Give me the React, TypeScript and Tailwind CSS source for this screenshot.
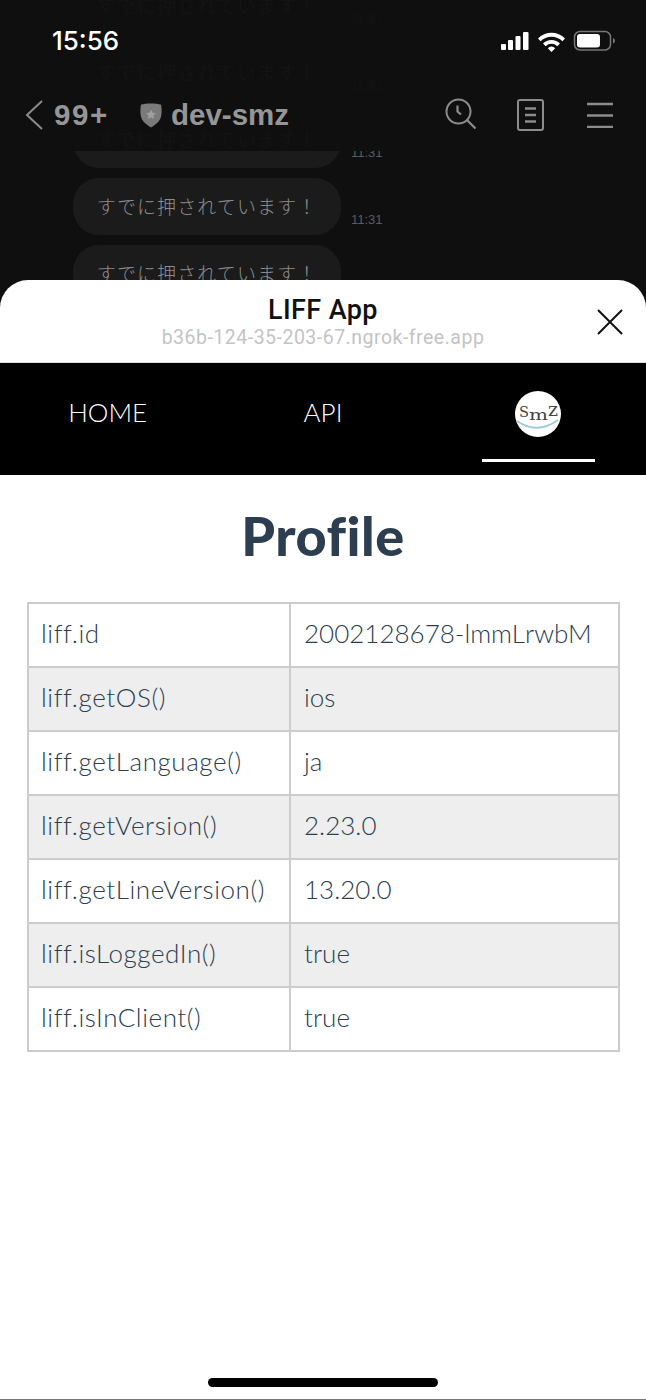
const rows = [
  ['liff.id', '2002128678-lmmLrwbM'],
  ['liff.getOS()', 'ios'],
  ['liff.getLanguage()', 'ja'],
  ['liff.getVersion()', '2.23.0'],
  ['liff.getLineVersion()', '13.20.0'],
  ['liff.isLoggedIn()', 'true'],
  ['liff.isInClient()', 'true'],
]

function StatusIcons() {
  return (
    <svg width="116" height="22" viewBox="0 0 116 22" className="block">
      <rect x="1" y="14" width="5" height="6" rx="1" fill="#fff" />
      <rect x="8" y="10" width="5" height="10" rx="1" fill="#fff" />
      <rect x="15.5" y="6" width="5" height="14" rx="1" fill="#fff" />
      <rect x="23" y="2" width="5.5" height="18" rx="1" fill="#fff" />
      <path d="M38 8.5a19 19 0 0 1 27 0l-2.6 2.8a15.300 15.300 0 0 0-21.800 0Z" fill="#fff" />
      <path d="M43 13.500a12 12 0 0 1 17 0l-2.700 2.800a8 8 0 0 0-11.600 0Z" fill="#fff" />
      <path d="M47.800 18.200a5 5 0 0 1 7.400 0L51.500 22Z" fill="#fff" />
      <rect x="74.500" y="1.500" width="36" height="18.500" rx="5.500" fill="none" stroke="#777" strokeWidth="1.500" />
      <rect x="77" y="4" width="23" height="13.500" rx="3" fill="#fff" />
      <path d="M113 8v5.500a3 3 0 0 0 2-2.700 3 3 0 0 0-2-2.800Z" fill="#777" />
    </svg>
  )
}

function NavIcons() {
  return (
    <div className="flex items-center">
      <svg width="33" height="33" viewBox="0 0 33 33" fill="none" stroke="#8c8c8c" strokeWidth="2" className="mr-[39px]">
        <circle cx="13.500" cy="13.500" r="12" />
        <path d="M22 22l8.500 8.500" strokeWidth="2.200" />
        <path d="M12.500 7.500v6l3.500 3" strokeWidth="2.200" />
      </svg>
      <svg width="27" height="32" viewBox="0 0 27 32" fill="none" stroke="#8c8c8c" strokeWidth="2" className="mr-[43px]">
        <rect x="1" y="1" width="25" height="30" rx="2" />
        <path d="M8 9.500h11M8 16h11M8 22.500h11" strokeWidth="2.400" />
      </svg>
      <svg width="26" height="26" viewBox="0 0 26 26" stroke="#8c8c8c" strokeWidth="2.400">
        <path d="M0 2h26M0 13.500h26M0 25h26" />
      </svg>
    </div>
  )
}

function Avatar() {
  return (
    <svg width="46" height="46" viewBox="0 0 46 46" className="block">
      <circle cx="23" cy="23" r="23" fill="#fff" />
      <text x="4" y="26" fontFamily="'DejaVu Serif', serif" fontSize="15" fill="#444" textLength="10" lengthAdjust="spacingAndGlyphs">S</text>
      <text x="14" y="28.500" fontFamily="'DejaVu Serif', serif" fontSize="14" fill="#444" textLength="19" lengthAdjust="spacingAndGlyphs">m</text>
      <text x="33" y="25" fontFamily="'DejaVu Serif', serif" fontSize="18" fill="#444" textLength="10" lengthAdjust="spacingAndGlyphs">z</text>
      <path d="M2 30Q22 44 43 29" fill="none" stroke="#9ccbe0" strokeWidth="1.800" />
    </svg>
  )
}

function Bubble() {
  return (
    <div className="flex items-end gap-[10px]">
      <div className="w-[268px] h-[57px] rounded-[26px] bg-[#1b1b1b] flex items-center justify-center shrink-0">
        <span className="text-[#8c8c8c] text-[19px] tracking-[1.1px] font-light whitespace-nowrap" style={{ fontFamily: "'Noto Sans CJK JP', sans-serif" }}>
          すでに押されています！
        </span>
      </div>
      <span className="text-[13px] pb-[6px] text-[#5c5c5c] font-['Liberation_Sans',sans-serif]">11:31</span>
    </div>
  )
}

export default function App() {
  return (
    <div className="w-[646px] h-[1400px] bg-[#0f0f0f] flex flex-col overflow-hidden font-['Lato',sans-serif]">
      {/* LINE chat behind the sheet */}
      <div className="relative h-[280px] shrink-0 overflow-hidden">
        <div className="flex flex-col gap-[10px] pl-[73px] -mt-[23px]">
          <Bubble />
          <Bubble />
          <Bubble />
          <Bubble />
          <Bubble />
        </div>

        <div className="absolute top-0 left-0 right-0 h-[151px] bg-[#0f0f0f]/[0.97] flex flex-col">
          <div className="flex items-center justify-between h-[22px] mt-[30px] pl-[52px] pr-[30px]">
            <span className="text-white text-[26px] font-medium leading-none font-['Inter',sans-serif]">15:56</span>
            <StatusIcons />
          </div>
          <div className="flex items-center justify-between mt-[46px] pl-[25px] pr-[33px]">
            <div className="flex items-center font-['Liberation_Sans',sans-serif] font-bold text-[#969696] text-[29.5px] leading-none">
              <svg width="18" height="30" viewBox="0 0 18 30" fill="none" stroke="#8c8c8c" strokeWidth="2" className="mr-[11px]">
                <path d="M17 1L2 15l15 14" />
              </svg>
              <span className="w-[54px] tracking-[1.6px] whitespace-nowrap">99+</span>
              <svg width="24" height="26" viewBox="0 0 24 26" className="ml-[31px] mr-[8px]">
                <path d="M2 2.500C7 1 17 1 22 2.500c1 5 1 11-1 15-2 3.500-6 6-9 8-3-2-7-4.500-9-8-2-4-2-10-1-15Z" fill="#7a7a7a" />
                <path d="M12 7.500l1.500 3.300 3.600.3-2.700 2.400.8 3.500-3.200-1.800-3.200 1.800.8-3.500-2.700-2.400 3.600-.3Z" fill="#a0a0a0" />
              </svg>
              <span>dev-smz</span>
            </div>
            <NavIcons />
          </div>
        </div>
      </div>

      {/* LIFF sheet */}
      <div className="relative flex-1 flex flex-col bg-white rounded-t-[28px] overflow-hidden">
        <div className="relative h-[82px] shrink-0 flex flex-col items-center pt-[14px]">
          <span className="text-[#111] text-[27px] font-medium leading-[32px] tracking-[0.4px] font-['Roboto',sans-serif]">LIFF App</span>
          <span className="text-[#c4c4c4] text-[19.5px] leading-[24px] tracking-[0.5px] font-['Roboto',sans-serif]">b36b-124-35-203-67.ngrok-free.app</span>
          <svg width="26" height="26" viewBox="0 0 26 26" stroke="#111" strokeWidth="2" className="absolute right-[23px] top-[29px]">
            <path d="M1 1l24 24M25 1L1 25" />
          </svg>
        </div>
        <div className="h-px bg-[#ddd] shrink-0" />

        <nav className="h-[112px] shrink-0 bg-black grid grid-cols-3 text-white text-[26px] font-light">
          <div className="flex items-center justify-center pb-[13px]">HOME</div>
          <div className="flex items-center justify-center pb-[13px]">API</div>
          <div className="flex flex-col items-center pt-[28px]">
            <Avatar />
            <div className="w-[113px] h-[3px] bg-white mt-[22px]" />
          </div>
        </nav>

        <h1 className="h-[127px] pb-[7px] shrink-0 flex items-center justify-center text-[#2c3e50] text-[54px] font-black tracking-[0.5px] [font-variant-ligatures:none]">Profile</h1>

        <table className="w-[593px] ml-[27px] table-fixed border-collapse text-[#2c3e50] text-[26px] font-light">
          <colgroup>
            <col className="w-[262px]" />
            <col />
          </colgroup>
          <tbody>
            {rows.map(([k, v], i) => (
              <tr key={k} className={i % 2 === 1 ? 'bg-[#eeeeee]' : 'bg-white'}>
                <td className="h-[64px] border-2 border-[#cccccc] pl-[12px] pb-[4px] pt-0 tracking-[0.57px]">{k}</td>
                <td className="h-[64px] border-2 border-[#cccccc] pl-[13px] pb-[4px] pt-0">{v}</td>
              </tr>
            ))}
          </tbody>
        </table>

        <div className="mt-auto flex flex-col items-center">
          <div className="w-[230px] h-[9px] rounded-full bg-black mb-[12px]" />
          <div className="w-full h-px bg-[#777]" />
        </div>
      </div>
    </div>
  )
}
